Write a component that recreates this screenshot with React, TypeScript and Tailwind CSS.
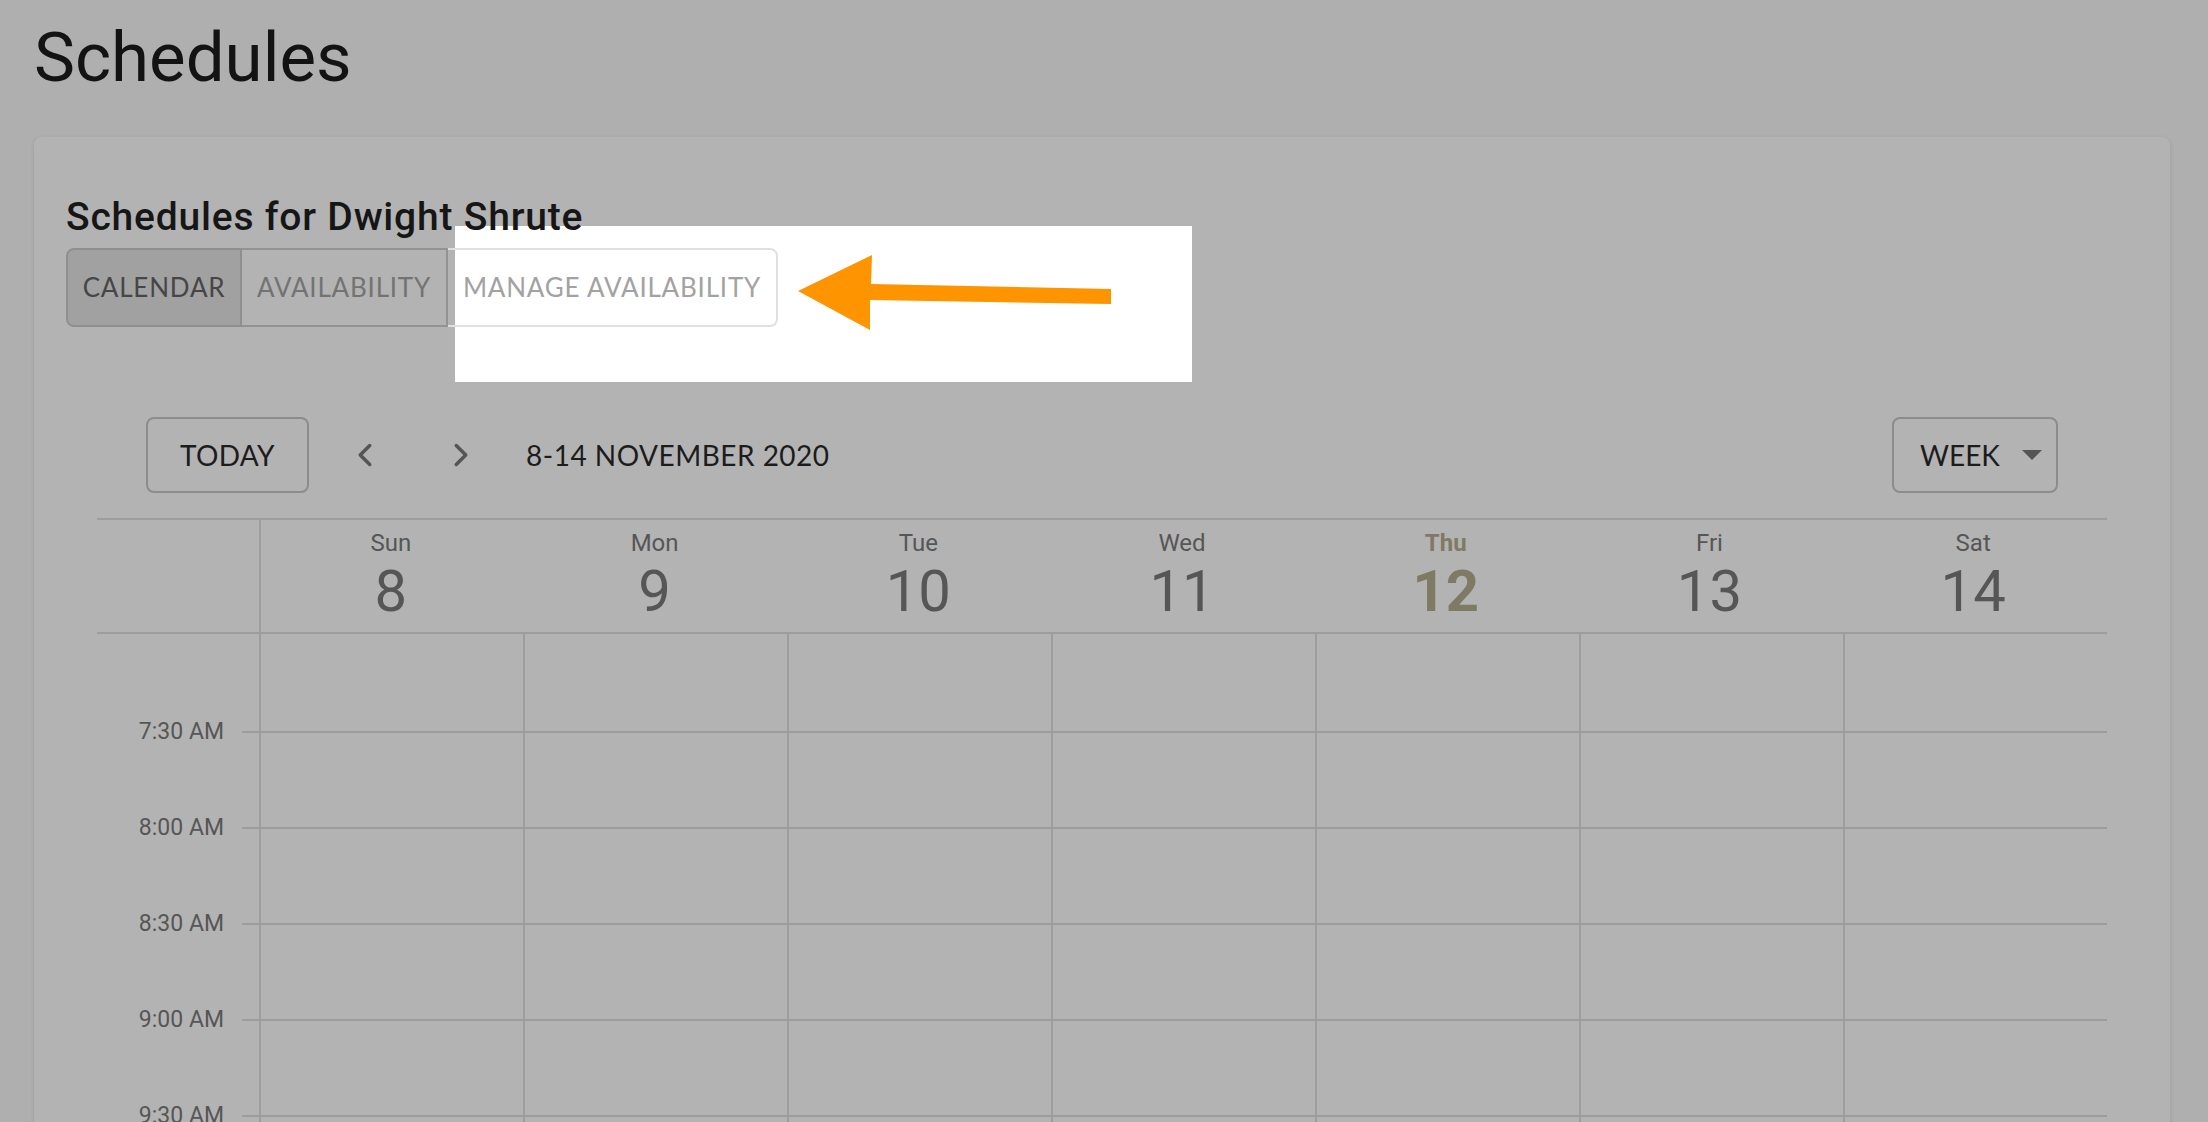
import { ChevronLeft, ChevronRight } from 'lucide-react';

const days = [
  { name: 'Sun', date: 8 },
  { name: 'Mon', date: 9 },
  { name: 'Tue', date: 10 },
  { name: 'Wed', date: 11 },
  { name: 'Thu', date: 12, today: true },
  { name: 'Fri', date: 13 },
  { name: 'Sat', date: 14 },
];

const slots = ['7:30 AM', '8:00 AM', '8:30 AM', '9:00 AM', '9:30 AM', '10:00 AM'];

const roboto = { fontFamily: 'Roboto, "Noto Sans", sans-serif' };
const lato = { fontFamily: 'Lato, "Open Sans", sans-serif' };

const App = () => {
  return (
    <div className="relative h-[1122px] w-[2208px] overflow-hidden bg-[#afafaf]" style={roboto}>
      <h1 className="ml-[34px] pt-[24px] text-[69px] leading-[68px] font-normal text-[#131313]">Schedules</h1>

      {/* Card */}
      <div className="mt-[45px] ml-[34px] w-[2136px] h-[1000px] rounded-[8px] bg-[#b3b3b3] shadow-[0_1px_4px_rgba(0,0,0,0.12)] px-[32px] pt-[61px]">
        <h2 className="relative z-20 text-[39px] leading-[38px] tracking-[0.8px] font-medium text-[#161616]">
          Schedules for Dwight Shrute
        </h2>

        {/* Tabs */}
        <div className="relative z-20 mt-[12px] flex h-[79px] text-[26px] tracking-[0.8px] uppercase" style={lato}>
          <div className="flex w-[176px] items-center justify-center rounded-l-[8px] border-2 border-[#8f8f8f] bg-[#a1a1a1] text-[#464646]">
            Calendar
          </div>
          <div className="flex w-[206px] items-center justify-center border-y-2 border-r-2 border-[#939393] text-[#737373]">
            Availability
          </div>
          <div className="flex w-[330px] items-center justify-center rounded-r-[8px] border-y-2 border-r-2 border-[#e0e0e0] text-[#a2a2a2]">
            Manage Availability
          </div>
        </div>

        {/* Calendar */}
        <div className="mx-[31px] mt-[90px]">
          {/* Toolbar */}
          <div className="flex h-[76px] items-center px-[49px]" style={lato}>
            <div className="flex h-[76px] w-[163px] items-center justify-center rounded-[8px] border-2 border-[#8c8c8c] text-[28px] tracking-[0.3px] text-[#1c1c1c]">
              TODAY
            </div>
            <div className="ml-[32px] flex h-[48px] w-[48px] items-center justify-center text-[#555555]">
              <ChevronLeft size={38} strokeWidth={2.2} />
            </div>
            <div className="ml-[48px] flex h-[48px] w-[48px] items-center justify-center text-[#555555]">
              <ChevronRight size={38} strokeWidth={2.2} />
            </div>
            <div className="ml-[41px] text-[28px] tracking-[0.5px] text-[#1c1c1c]">8-14 NOVEMBER 2020</div>
            <div className="ml-auto flex h-[76px] w-[166px] items-center rounded-[8px] border-2 border-[#8c8c8c] pl-[26px] pr-[12px] text-[28px] text-[#1c1c1c]">
              <span>WEEK</span>
              <svg className="ml-auto mr-[2px]" width="20" height="10" viewBox="0 0 20 10">
                <polygon points="0,0 20,0 10,10" fill="#555555" />
              </svg>
            </div>
          </div>

          {/* Day header */}
          <div className="mt-[25px] flex h-[116px] border-y-2 border-[#9d9d9d]">
            <div className="w-[164px] border-r-2 border-[#9d9d9d]" />
            {days.map((d) => (
              <div
                key={d.name}
                className={`flex flex-1 flex-col items-center pt-[11px] pr-[4px] ${d.today ? 'text-[#7f7a63] font-bold' : 'text-[#565656]'}`}
              >
                <span className="text-[24px] leading-[24px]">{d.name}</span>
                <span className="mt-[7px] text-[58px] leading-[58px]">{d.date}</span>
              </div>
            ))}
          </div>

          {/* Body */}
          <div className="flex">
            <div className="w-[145px] pt-[50px]">
              {slots.map((s) => (
                <div key={s} className="flex h-[96px] items-center justify-end pr-[18px] text-[23px] text-[#565656]">
                  {s}
                </div>
              ))}
            </div>
            <div className="flex flex-1 flex-col">
              {[99, 96, 96, 96, 96, 96].map((h, i) => (
                <div key={i} className="flex border-b-2 border-[#9d9d9d]" style={{ height: h }}>
                  <div className="w-[19px] border-r-2 border-[#9d9d9d]" />
                  {days.map((d, j) => (
                    <div
                      key={d.name}
                      className={`flex-1 ${j < days.length - 1 ? 'border-r-2 border-[#9d9d9d]' : ''}`}
                    />
                  ))}
                </div>
              ))}
            </div>
          </div>
        </div>
      </div>

      {/* Spotlight over the manage availability tab */}
      <div className="absolute left-[455px] top-[226px] z-10 h-[156px] w-[737px] bg-white">
        <svg className="absolute left-0 top-0" width="737" height="156" viewBox="455 226 737 156">
          <polygon
            points="798,291 872,255 871,284 1111,289 1111,304 870,300 870,330"
            fill="#fe9400"
          />
        </svg>
      </div>
    </div>
  );
};

export default App;
